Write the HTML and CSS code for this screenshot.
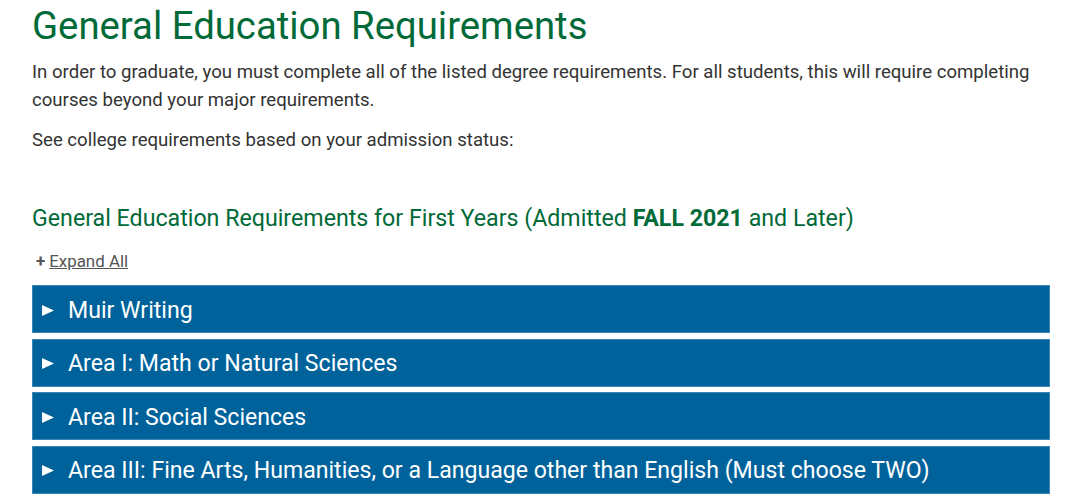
FILE: index.html
```html
<!DOCTYPE html>
<html lang="en">
<head>
<meta charset="utf-8">
<title>General Education Requirements</title>
<link rel="stylesheet" href="styles.css">
</head>
<body>
<main class="page">
  <h1 class="title">General Education Requirements</h1>
  <p class="lead">In order to graduate, you must complete all of the listed degree requirements. For all students, this will require completing courses beyond your major requirements.</p>
  <p class="lead">See college requirements based on your admission status:</p>
  <h2 class="subtitle">General Education Requirements for First Years (Admitted <strong>FALL 2021</strong> and Later)</h2>
  <div class="expand"><span class="plus">+</span><a class="expand-link" href="#">Expand All</a></div>
  <ul class="accordion">
    <li class="acc-item"><svg class="caret" viewBox="0 0 12 11" aria-hidden="true"><path d="M0 0 L12 5.5 L0 11 Z"/></svg><span class="acc-label">Muir Writing</span></li>
    <li class="acc-item"><svg class="caret" viewBox="0 0 12 11" aria-hidden="true"><path d="M0 0 L12 5.5 L0 11 Z"/></svg><span class="acc-label">Area I: Math or Natural Sciences</span></li>
    <li class="acc-item"><svg class="caret" viewBox="0 0 12 11" aria-hidden="true"><path d="M0 0 L12 5.5 L0 11 Z"/></svg><span class="acc-label">Area II: Social Sciences</span></li>
    <li class="acc-item"><svg class="caret" viewBox="0 0 12 11" aria-hidden="true"><path d="M0 0 L12 5.5 L0 11 Z"/></svg><span class="acc-label">Area III: Fine Arts, Humanities, or a Language other than English (Must choose TWO)</span></li>
  </ul>
</main>
</body>
</html>
```

FILE: styles.css
```css
html, body {
  margin: 0;
  padding: 0;
  background: #ffffff;
}
body {
  font-family: Roboto, "Liberation Sans", Arial, sans-serif;
  color: #333333;
}
.page {
  padding: 3px 30px 0 32px;
}
.title {
  margin: 0;
  font-size: 38.3px;
  line-height: 46px;
  font-weight: 400;
  color: #006a38;
}
.lead {
  margin: 9px 0 0;
  font-size: 18.6px;
  line-height: 28px;
  color: #333333;
}
.lead + .lead {
  margin-top: 12px;
}
.subtitle {
  margin: 49px 0 0;
  font-size: 23.2px;
  line-height: 30px;
  font-weight: 400;
  color: #006a38;
}
.subtitle strong {
  font-weight: 700;
}
.expand {
  margin-top: 18px;
  display: flex;
  align-items: center;
  font-size: 16.9px;
  line-height: 20px;
  color: #555555;
  padding-left: 4px;
}
.plus {
  font-weight: 700;
  margin-right: 4px;
}
.expand-link {
  color: #555555;
  text-decoration: underline;
}
.accordion {
  list-style: none;
  margin: 14px 0 0;
  padding: 0;
  width: 1018px;
  display: flex;
  flex-direction: column;
  gap: 5.5px;
}
.acc-item {
  display: flex;
  align-items: center;
  box-sizing: border-box;
  height: 48px;
  background: #00629b;
  border: 1px solid #3b86b8;
  color: #ffffff;
  font-size: 23.1px;
  padding: 2px 0 0 9px;
}
.caret {
  width: 12px;
  height: 11px;
  fill: #ffffff;
  margin-right: 14px;
  flex: none;
}
```
